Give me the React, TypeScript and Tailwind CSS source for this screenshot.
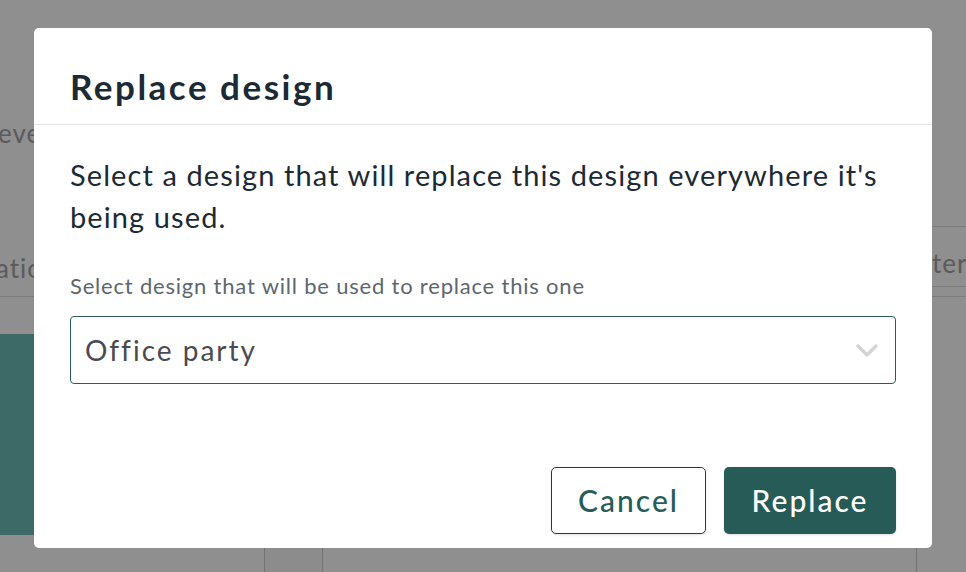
function Background() {
  return (
    <div className="h-screen w-full bg-white overflow-hidden flex flex-col text-[#a2a2a2]" style={{ fontFamily: 'Lato, "Liberation Sans", sans-serif' }}>
      <div className="pt-[116px] h-[150px] flex shrink-0">
        <span className="text-[26px] leading-[34px] tracking-[1px] -ml-[2px]">eve</span>
      </div>
      <div className="flex justify-between items-start mt-[76px] shrink-0">
        <span className="mt-[25px] text-[26px] leading-[34px] tracking-[1px] -ml-[4px]">atio</span>
        <div className="w-[120px] h-[61px] border-y border-[#dedede] flex items-center pl-[84px] -mr-[2px]">
          <span className="text-[26px] leading-[34px] tracking-[1px] mt-[12px]">tern</span>
        </div>
      </div>
      <div className="border-t border-[#dedede] mt-[9px] shrink-0" />
      <div className="bg-[#6ebcb6] h-[201px] w-[400px] mt-[37px] shrink-0" />
      <div className="flex mt-[13px] h-[40px] shrink-0">
        <div className="w-[264px]" />
        <div className="w-[59px] border-x border-[#cccccc] bg-[#fafafa]" />
        <div className="w-[593px]" />
        <div className="w-[50px] border-l border-[#cccccc]" />
      </div>
    </div>
  );
}

export default function App() {
  return (
    <div className="relative h-screen w-full overflow-hidden" style={{ fontFamily: 'Lato, "Liberation Sans", sans-serif' }}>
      <Background />
      <div className="absolute inset-0 bg-black/[0.44] flex items-start justify-center pt-[28px]">
        <div className="w-[898px] h-[520px] bg-white rounded-[5px] flex flex-col">
          <div className="h-[97px] px-[36px] border-b border-[#e6e6e6] flex items-center pt-[20px]">
            <h1 className="text-[35px] leading-[40px] font-bold tracking-[2.5px] text-[#1c2a35]">Replace design</h1>
          </div>
          <div className="px-[36px] pt-[29px] flex flex-col flex-1">
            <p className="text-[29px] leading-[42px] tracking-[1.1px] text-[#1c2a35] pr-[10px]">
              Select a design that will replace this design everywhere it's being used.
            </p>
            <label className="mt-[34px] text-[22px] leading-[28px] tracking-[0.8px] text-[#5c676e]">
              Select design that will be used to replace this one
            </label>
            <div className="mt-[16px] h-[68px] border border-[#2a5c58] rounded-[4px] flex items-center justify-between pl-[14px] pr-[16px]">
              <span className="text-[28px] tracking-[2px] text-[#4a4a52]">Office party</span>
              <svg width="24" height="16" viewBox="0 0 24 16" fill="none" className="mt-[1px]">
                <path d="M3 3 L12 12 L21 3" stroke="#d4d4d4" strokeWidth="3.5" strokeLinecap="round" strokeLinejoin="round" />
              </svg>
            </div>
            <div className="flex-1" />
            <div className="flex justify-end gap-[18px] pb-[14px]">
              <button className="w-[155px] h-[67px] border border-[#2f3b3b] rounded-[5px] bg-white text-[30px] font-medium tracking-[2px] text-[#275c58] shadow-sm">
                Cancel
              </button>
              <button className="w-[172px] h-[67px] rounded-[5px] bg-[#265b57] text-[30px] font-medium tracking-[2px] text-white shadow-sm">
                Replace
              </button>
            </div>
          </div>
        </div>
      </div>
    </div>
  );
}
